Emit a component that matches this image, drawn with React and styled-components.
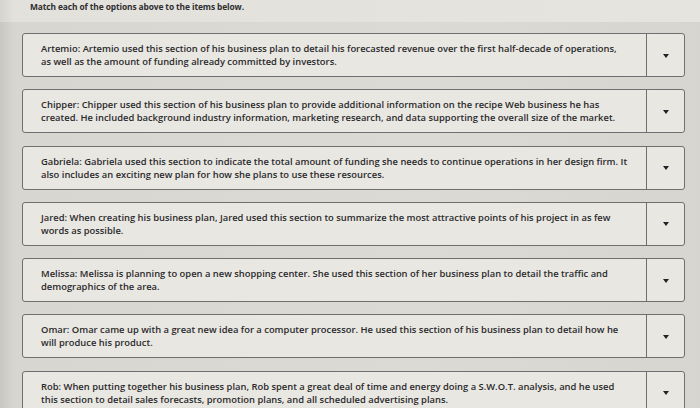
import React from 'react';
import styled, { createGlobalStyle } from 'styled-components';

// each prompt keeps its own line breaks so the wrap stays fixed
const items = [
  [
    'Artemio: Artemio used this section of his business plan to detail his forecasted revenue over the first half-decade of operations,',
    'as well as the amount of funding already committed by investors.',
  ],
  [
    'Chipper: Chipper used this section of his business plan to provide additional information on the recipe Web business he has',
    'created. He included background industry information, marketing research, and data supporting the overall size of the market.',
  ],
  [
    'Gabriela: Gabriela used this section to indicate the total amount of funding she needs to continue operations in her design firm. It',
    'also includes an exciting new plan for how she plans to use these resources.',
  ],
  [
    'Jared: When creating his business plan, Jared used this section to summarize the most attractive points of his project in as few',
    'words as possible.',
  ],
  [
    'Melissa: Melissa is planning to open a new shopping center. She used this section of her business plan to detail the traffic and',
    'demographics of the area.',
  ],
  [
    'Omar: Omar came up with a great new idea for a computer processor. He used this section of his business plan to detail how he',
    'will produce his product.',
  ],
  [
    'Rob: When putting together his business plan, Rob spent a great deal of time and energy doing a S.W.O.T. analysis, and he used',
    'this section to detail sales forecasts, promotion plans, and all scheduled advertising plans.',
  ],
];

export default function App() {
  return (
    <>
      <GlobalStyle />
      <Page>
        <Instructions>Match each of the options above to the items below.</Instructions>
        <List>
          {items.map((lines, i) => (
            <MatchRow key={i}>
              <Prompt>
                {lines.map((line, j) => (
                  <Line key={j}>{line}</Line>
                ))}
              </Prompt>
              <SelectButton>
                <Caret />
              </SelectButton>
            </MatchRow>
          ))}
        </List>
      </Page>
    </>
  );
}

const GlobalStyle = createGlobalStyle`
  html, body {
    margin: 0;
    padding: 0;
    height: 408px;
    overflow: hidden;
    background: #d9d7d2;
  }
`;

const Page = styled.div`
  width: 700px;
  height: 408px;
  overflow: hidden;
  font-family: 'Open Sans', 'Liberation Sans', Arial, sans-serif;
  background: linear-gradient(90deg, #c9c7c2 0px, #d8d6d1 14px, #dcdad5 60%, #d7d5d0 100%);
`;

const Instructions = styled.div`
  height: 22px;
  box-sizing: border-box;
  padding: 1px 0 0 30px;
  font-size: 8.4px;
  font-weight: 700;
  letter-spacing: -0.1px;
  color: #2e2e30;
  background: linear-gradient(90deg, #d6d4cf 0px, #e3e1dc 14px, #e6e4df 100%);
`;

const List = styled.div`
  display: flex;
  flex-direction: column;
  gap: 12.25px;
  padding: 11px 0 0 22px;
`;

const MatchRow = styled.div`
  display: flex;
  width: 663px;
  height: 44px;
  flex-shrink: 0;
  box-sizing: border-box;
  border: 1px solid #6f6f72;
  border-radius: 3px;
  background: #e9e7e2;
`;

const Prompt = styled.div`
  flex: 1;
  padding: 8px 0 0 18px;
  font-size: 9.4px;
  font-weight: 600;
  line-height: 13px;
  color: #2a2a2c;
  overflow: hidden;
`;

const Line = styled.div`
  white-space: nowrap;
`;

const SelectButton = styled.div`
  width: 37px;
  display: flex;
  align-items: center;
  justify-content: center;
  border-left: 1px solid #6f6f72;
`;

const Caret = styled.span`
  width: 0;
  height: 0;
  border-left: 3px solid transparent;
  border-right: 3px solid transparent;
  border-top: 4px solid #222226;
  margin-top: 1px;
`;
